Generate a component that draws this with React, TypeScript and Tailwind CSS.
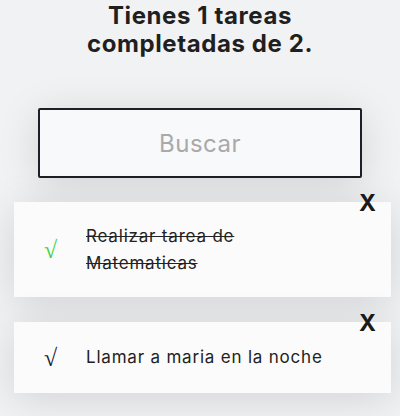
import React from "react";

const tasks = [
  { text: "Realizar tarea de Matematicas", done: true, h: "h-[95px]" },
  { text: "Llamar a maria en la noche", done: false, h: "h-[71px]" },
];

export default function App() {
  return (
    <div className="min-h-[416px] w-[400px] overflow-hidden bg-[#f1f2f4] font-['Inter',sans-serif] text-[#222]">
      <h1 className="pt-[2px] text-center text-[24px] font-bold leading-[28px] tracking-[0.6px] text-[#1f1f1f]">
        Tienes 1 tareas
        <br />
        completadas de 2.
      </h1>
      <div className="mt-[50px] flex justify-center">
        <input
          placeholder="Buscar"
          className="h-[70px] w-[324px] rounded-[2px] border-2 border-[#1e1f26] bg-[#f8f9fb] text-center text-[24px] tracking-[0.5px] text-[#222] shadow-[0_6px_40px_rgba(0,0,0,0.13)] outline-none placeholder:text-[#a9a9a9]"
        />
      </div>
      <ul className="mt-[24px] flex flex-col gap-[25px]">
        {tasks.map((t) => (
          <li
            key={t.text}
            className={`relative ml-[14px] flex w-[377px] items-center bg-[#fbfbfb] shadow-[0_6px_40px_rgba(0,0,0,0.13)] ${t.h}`}
          >
            <span
              className={`ml-[30px] w-[42px] font-['Liberation_Serif',serif] text-[24px] leading-none ${t.done ? "text-[#3ad43a]" : "text-[#1a1a2e]"}`}
            >
              √
            </span>
            <p
              className={`w-[255px] text-[17px] leading-[27px] tracking-[0.8px] text-[#222] ${t.done ? "line-through" : ""}`}
            >
              {t.text}
            </p>
            <span className="absolute right-[15px] top-[-10px] text-[23px] font-bold leading-none text-[#1a1a1a]">
              X
            </span>
          </li>
        ))}
      </ul>
    </div>
  );
}
